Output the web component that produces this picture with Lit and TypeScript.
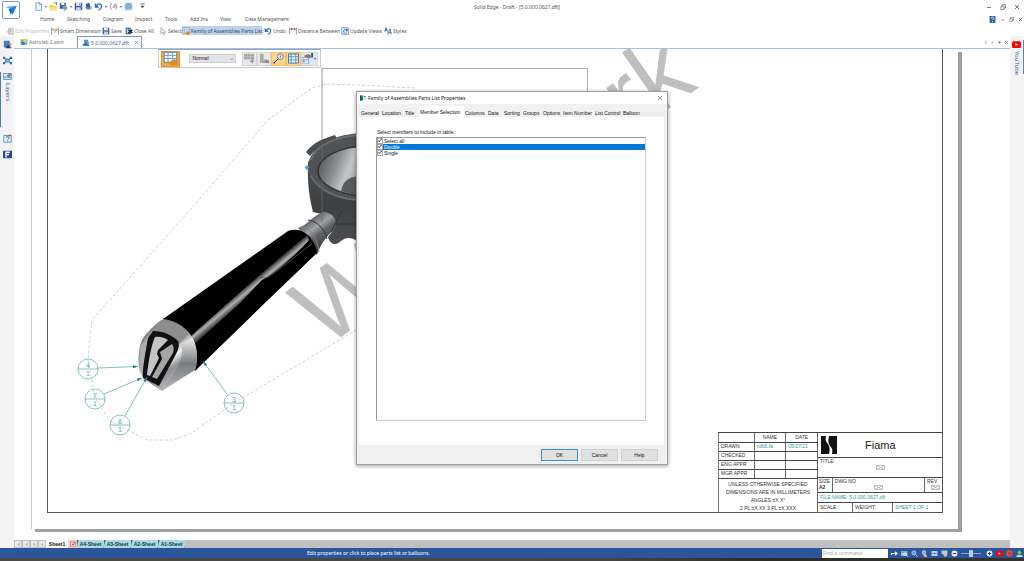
import { LitElement, html, svg, css, TemplateResult } from "lit";
import { customElement, property, state } from "lit/decorators.js";
import { classMap } from "lit/directives/class-map.js";

const icons: Record<string, TemplateResult> = {
  logo: svg`<path d="M1 3.400 11 2.200 6.600 5.400z" fill="#4fb7f0"/><path d="M4 5.200 11 2.400 7.400 10z" fill="#1f7fd0"/><path d="M4 5 6 10.400 6.600 6z" fill="#0f5fb0"/>`,
  page: svg`<path d="M2.500 1h5l2.500 2.500V11h-7.500z" fill="#eef5fc" stroke="#5f8dc0"/><path d="M7.500 1v2.500H10" fill="none" stroke="#5f8dc0"/>`,
  open: svg`<path d="M1 4h4l1 1h4v6H1z" fill="#e9c53c"/><path d="M3 6h9l-2 5H1z" fill="#f8e27a"/><path d="M6 1h4v3" fill="none" stroke="#5aa646" stroke-width="1.500"/>`,
  save: svg`<path d="M1 1h10v10H1z" fill="#3f5fa8"/><path d="M3 1h6v4H3z" fill="#fff"/><path d="M3 7h6v4H3z" fill="#c6d2ec"/><path d="M7 2h1v2H7z" fill="#3f5fa8"/>`,
  saveAll: svg`<path d="M1 1h8v8H1z" fill="#3f5fa8"/><path d="M3 1h4v3H3z" fill="#fff"/><path d="M5 5h5v5H5z" fill="#7d9fd4"/><path d="M7 11l4-4" stroke="#6db04c" stroke-width="2"/>`,
  print: svg`<path d="M2 3 7 1l2 6-5 3z" fill="#2f5f9f"/><path d="M1 7h8v3H4z" fill="#4d8cc8"/><path d="M8 6h3v4H8z" fill="#a8c6e6"/>`,
  undo: svg`<path d="M3 5.500C5 1 11 2 10 6.500 9.500 9 8 10 6 11" fill="none" stroke="#2b7ac4" stroke-width="1.800"/><path d="M1 1v6.500h6z" fill="#2b6fb8"/>`,
  link: svg`<path d="M4 2C1 3 1 9 4 10M8 2c3 1 3 7 0 8M5 8l3-5v5" fill="none" stroke="#8d939b" stroke-width="1.300"/>`,
  sheetSet: svg`<path d="M1 1h10v10H1z" fill="#a9cbea"/><path d="M3 3h6M1 5.500h10M2 8h8" stroke="#4a86bf"/>`,
  more: svg`<path d="M3 2.500h6" stroke="#444"/><path d="M3 5h6L6 8z" fill="#444"/>`,
  edit: svg`<path d="M4 2h7v9H4z" fill="#ddd" stroke="#b3b3b3"/><path d="M1 7l5-4 3 3-5 5z" fill="#c4c4c4"/>`,
  dimension: svg`<path d="M1 1v10M11 1v10M1 4h4M8 4h3" stroke="#3764b0"/><path d="M8 1 4 6h2L4 11l6-6H7l2-4z" fill="#f0b923"/>`,
  closeAll: svg`<path d="M1 1h8v10H1z" fill="#3973c0"/><path d="M3 3h5v6H3z" fill="#cfe0f5"/><path d="M5 4l6 5M11 4 5 9" stroke="#111" stroke-width="2"/>`,
  select: svg`<path d="M3 1v9l2-2 2 4 1-1-1-3h3z" fill="#fff" stroke="#888"/>`,
  family: svg`<path d="M1 1h10v8H1z" fill="#fff" stroke="#3f74b8" stroke-width=".7"/><path d="M1 3.500h10M1 6h10M4 1v8M7.500 1v8" stroke="#5f92cc" stroke-width=".7"/><path d="M5 9 6.500 7.500 8 8.200 8.500 6.500 10 6.500 10.500 8 12 8.500 11.500 11 9 11.500 5.500 11z" fill="#e08a17"/>`,
  distance: svg`<path d="M1 1v10M11 1v10" stroke="#3764b0"/><path d="M1 3h10" stroke="#d03030"/><path d="M4 1.500v3M8 1.500v3" stroke="#d03030" stroke-width="1.500"/>`,
  update: svg`<path d="M1 1h10v10H1z" fill="#eaf3fc" stroke="#3d7dcc"/><path d="M4 8C3 4 6 3 9 4.500" fill="none" stroke="#2470c8" stroke-width="1.500"/><path d="M7.500 2 11 5 7.500 7z" fill="#2470c8"/><path d="M4 9h5" stroke="#2470c8"/>`,
  styles: svg`<path d="M1 7 3 1l2 6M1.700 5h2.600M5 11 9 3l2 8M6.500 8.500h4" fill="none" stroke="#235a9c" stroke-width="1.300"/>`,
  asm: svg`<path d="M1 2h10v8H1z" fill="#5db0e0"/><path d="M5 1h5v6H5z" fill="#f3cf3c"/><path d="M2 6h5v4H2z" fill="#2878b8"/>`,
  dft: svg`<path d="M4 1h5l2 9H5z" fill="#4ba4dd"/><path d="M1 8l5-2 5 4H1z" fill="#2a6fb4"/><path d="M4 1v6" stroke="#12406f"/>`,
  cube: svg`<path d="M1 1h8v9H1z" fill="#4d7fc0"/><path d="M7 6l4 4v1H3z" fill="#1d4077"/><path d="M9 4h2v6H9z" fill="#c2a86a"/>`,
  network: svg`<path d="M3 3l6 6M9 3 3 9" stroke="#3c78b4"/><path d="M3.500 4h5v4h-5z" fill="#7cb0de" stroke="#2f6fa8"/><path d="M0 1h3v3H0zM9 1h3v3H9zM0 8h3v3H0zM9 8h3v3H9z" fill="#2f6fa8"/>`,
  layers: svg`<path d="M.5 2h11v8H.5z" fill="#d8e8f6" stroke="#4c84bf"/><path d="M2 5l3 3H2z" fill="#55a152"/><path d="M5 4h5v4H6z" fill="#4694d6"/><path d="M7 2h4v2H7z" fill="#d05b5b"/>`,
  help: svg`<path d="M1 2h10v9H1z" fill="#eaf3fc" stroke="#3d7dbd"/><path d="M7 1h4v2H7z" fill="#d8453c"/><path d="M4 5c0-2 4-2 4 0 0 1.500-2 1.500-2 2.500M6 9v1" fill="none" stroke="#1f66a8" stroke-width="1.300"/>`,
  fmark: svg`<path d="M0 1h12v10H0z" fill="#26479e"/><path d="M4 10V3h5M4 6h4" fill="none" stroke="#fff" stroke-width="1.800"/>`,
  helpSolid: svg`<path d="M1 0h10v12H1z" fill="#2f67ad"/><path d="M4 4c0-2.500 4-2.500 4 0 0 1.500-2 1.500-2 3M6 9v1.500" fill="none" stroke="#fff" stroke-width="1.400"/>`,
  minimize: svg`<path d="M2 7h8" stroke="#555" stroke-width="1.500"/>`,
  restore: svg`<path d="M2 4.500h6V11H2zM4 4V1.500h7V8H8" fill="none" stroke="#555" stroke-width="1.300"/>`,
  close: svg`<path d="M2 2l8 8M10 2l-8 8" stroke="currentColor" stroke-width="1.600"/>`,
  left: svg`<path d="M8 2v8L4 6z" fill="#aaa"/>`,
  right: svg`<path d="M4 2v8l4-4z" fill="#aaa"/>`,
  down: svg`<path d="M2 4h8L6 8.500z" fill="#555"/>`,
  chevron: svg`<path d="M1 4l5 5 5-5" fill="none" stroke="#777" stroke-width="1.800"/>`,
  youtube: svg`<rect y="1.500" width="12" height="9" rx="2" fill="#f00"/><path d="M4.500 4v4L8 6z" fill="#fff"/>`,
  tableGray: svg`<path d="M0 1h11v6H0z" fill="#a6a6a6"/><path d="M0 4h11M3.500 1v6M7.500 1v6" stroke="#c8c8c8" stroke-width=".7"/><path d="M6.500 9h5M9 6.500v5" stroke="#999" stroke-width="1.500"/>`,
  stepGray: svg`<path d="M1 1h4v6h4v4H1z" fill="#aaa"/><path d="M7 8h4v3H7z" fill="#8a8a8a"/>`,
  balloon: svg`<circle cx="8" cy="4" r="3.200" fill="#eef3fb" stroke="#5e6f96"/><path d="M8 2.500v3" stroke="#5e6f96"/><path d="M5.500 6.500 1 11" stroke="#222"/><circle cx="1.500" cy="10.500" r="1" fill="#222"/>`,
  grid: svg`<path d="M.5 1h11v10H.5z" fill="#dff0fa" stroke="#3c6ea0"/><path d="M.5 4h11M.5 7.500h11M3.500 1v10M8.500 1v10" stroke="#4c80ac" stroke-width=".8"/>`,
  props: svg`<path d="M0 5h7v7H0z" fill="#e4edf8" stroke="#6b90bd" stroke-width=".7"/><path d="M1 7.500h2M4 7.500h2M1 9.500h2" stroke="#3b68a0"/><path d="M2 3l5-2 3 2-1 3-5-1z" fill="#8b7c62"/><path d="M10 0h2v5h-2z" fill="#344f9c"/>`,
  go: svg`<path d="M0 5h7V2l5 4-5 4V7H3L0 9z" fill="#fff"/>`,
  fit: svg`<path d="M0 2h11v8H0z" fill="#9fc4ee"/><path d="M1 4h9" stroke="#2d5fa5"/><circle cx="7" cy="7" r="2.300" fill="none" stroke="#fff" stroke-width="1.300"/><path d="M9 9l3 3" stroke="#fff"/>`,
  zoom: svg`<circle cx="5" cy="5" r="3.500" fill="#5d8ecb" stroke="#d5e5f8" stroke-width="1.300"/><path d="M8 8l3 3" stroke="#d5e5f8" stroke-width="1.500"/>`,
  zoomArea: svg`<circle cx="5" cy="4" r="3" fill="#7ba6da" stroke="#fff"/><path d="M7 6v6M4 8l6 3" stroke="#f3d267" stroke-width="2"/>`,
  windowFit: svg`<path d="M1 2h10v8H1z" fill="#dce9f8"/><path d="M3 4v4M9 4v4M5 5h2v2H5z" stroke="#3467b0"/>`,
  pan: svg`<path d="M1 1h10v6H1z" fill="#b6d1f0"/><path d="M4 5l5-1 2 5-4 3-3-3z" fill="#d9c39c"/>`,
  minus: svg`<circle cx="6" cy="6" r="5" fill="#eaf0f8"/><path d="M3 6h6" stroke="#234b87" stroke-width="1.800"/>`,
  plus: svg`<circle cx="6" cy="6" r="5" fill="#eaf0f8"/><path d="M3 6h6M6 3v6" stroke="#234b87" stroke-width="1.800"/>`,
  record: svg`<circle cx="6" cy="6" r="5.500" fill="#e0523f"/><circle cx="6" cy="6" r="2.500" fill="#c63a2c"/>`,
  upload: svg`<path d="M6 0l4 5H8v3H4V5H2z" fill="#7cc84a"/><path d="M1 9h10v3H1z" fill="#d6e4f2"/>`,
  tabPic: svg`<path d="M1 2h10v8H1z" fill="#f6e5f0" stroke="#d0507c"/><path d="M3 8l3-4 3 4z" fill="#4a74c8"/><path d="M8 2h3v3H8z" fill="#e04040"/>`,
  window: svg`<path d="M0 1h12v10H0z" fill="#cfe3ea"/><path d="M0 1h6v10H0z" fill="#2d8573"/><path d="M0 1h3v10H0z" fill="#1c4b64"/><path d="M8 2h3v2H8z" fill="#2f61b5"/>`,
};

@customElement("ui-icon")
export class UiIcon extends LitElement {
  @property() name = "";
  static styles = css`
    :host { display: inline-flex; flex: none; width: 8px; height: 8px; }
    svg { width: 100%; height: 100%; display: block; }
  `;
  render() {
    return html`<svg viewBox="0 0 12 12" aria-hidden="true">${icons[this.name]}</svg>`;
  }
}

@customElement("part-drawing")
export class PartDrawing extends LitElement {
  static styles = css`
    :host { display: block; }
    svg { display: block; width: 996px; height: 491px; overflow: hidden; }
    .mark { font: 100px "Liberation Sans", sans-serif; fill: #bfbfbf; }
    .phantom { fill: none; stroke: #c4c4c4; stroke-dasharray: 3 2; stroke-width: 0.8; }
    .balloon { fill: none; stroke: #66b4b8; stroke-width: 0.8; }
    .leader { stroke: #5fb0b4; stroke-width: 0.8; }
    .arrow { fill: #0f8086; }
    .num { font: 7px "Liberation Sans", sans-serif; fill: #57aaae; text-anchor: middle; }
  `;
  private balloons = [
    { x: 88, y: 369, n: "4", x1: 98, y1: 368, x2: 138, y2: 366.5 },
    { x: 95, y: 399, n: "7", x1: 104, y1: 394, x2: 142, y2: 378 },
    { x: 120, y: 425, n: "8", x1: 125, y1: 416, x2: 147, y2: 377 },
    { x: 234, y: 403, n: "3", x1: 227, y1: 394, x2: 203, y2: 361 },
  ];
  private balloon(b: (typeof this.balloons)[number]) {
    const a = (Math.atan2(b.y2 - b.y1, b.x2 - b.x1) * 180) / Math.PI;
    return svg`
      <circle class="balloon" cx=${b.x} cy=${b.y} r="10"/>
      <path class="balloon" d=${`M${b.x - 10} ${b.y}h20`}/>
      <text class="num" x=${b.x} y=${b.y - 1}>${b.n}</text>
      <text class="num" x=${b.x} y=${b.y + 7}>1</text>
      <line class="leader" x1=${b.x1} y1=${b.y1} x2=${b.x2} y2=${b.y2}/>
      <path class="arrow" d="M0 0-5-1.500-5 1.500z" transform=${`translate(${b.x2} ${b.y2}) rotate(${a})`}/>`;
  }
  render() {
    return html`<svg viewBox="14 49 996 491" role="img" aria-label="Portafilter drawing">
      <defs>
        <linearGradient id="stripe" gradientUnits="userSpaceOnUse" x1="236" y1="292" x2="246" y2="304">
          <stop offset="0" stop-color="#000"/><stop offset=".45" stop-color="#b0b0b0"/><stop offset=".6" stop-color="#777"/><stop offset="1" stop-color="#000"/>
        </linearGradient>
        <linearGradient id="cap" gradientUnits="userSpaceOnUse" x1="150" y1="325" x2="186" y2="378">
          <stop offset="0" stop-color="#8d8d8d"/><stop offset=".35" stop-color="#6e6e6e"/><stop offset=".6" stop-color="#f2f2f2"/><stop offset=".75" stop-color="#8c9296"/><stop offset="1" stop-color="#b9bec1"/>
        </linearGradient>
        <linearGradient id="side" x1="0" y1="0" x2="0" y2="1">
          <stop offset="0" stop-color="#eee"/><stop offset=".5" stop-color="#777c80"/><stop offset="1" stop-color="#aeb3b6"/>
        </linearGradient>
        <linearGradient id="neck" gradientUnits="userSpaceOnUse" x1="306" y1="216" x2="328" y2="246">
          <stop offset="0" stop-color="#3d3f43"/><stop offset=".4" stop-color="#a0a2a7"/><stop offset=".6" stop-color="#606266"/><stop offset="1" stop-color="#3a3b3e"/>
        </linearGradient>
        <linearGradient id="cup" gradientUnits="userSpaceOnUse" x1="317" y1="160" x2="368" y2="180">
          <stop offset="0" stop-color="#505355"/><stop offset=".35" stop-color="#8b8e90"/><stop offset=".6" stop-color="#c4c7c9"/><stop offset="1" stop-color="#85888a"/>
        </linearGradient>
        <linearGradient id="body" x1="0" y1="0" x2="0" y2="1">
          <stop offset="0" stop-color="#55585a"/><stop offset=".6" stop-color="#3e4042"/><stop offset="1" stop-color="#4a4c4e"/>
        </linearGradient>
      </defs>

      <path d="M322 68.500h265.500V200" fill="none" stroke="#b0b0b0"/>
      <path class="phantom" d="M415 88 360 85 325 84 312 88 268 120 190 210 92 320 88 360 95 398 110 421 147 440H172L190 434 234 403 356 330"/>
      <text class="mark" transform="translate(324 349) rotate(-35)">W</text>
      <text class="mark" transform="translate(631 135) rotate(-35)">rk</text>

      <path d="M308 162 C307 185 310 200 313 212 L330 216 335 228 328 237 C330 245 336 246 341 241 348 235 355 239 362 244 H400V140H330z" fill="url(#body)"/>
      <path d="M306 152 C314 142 322 139 335 135 L337 139 C325 142 317 148 310 156z" fill="#4b4e50"/>
      <ellipse cx="364" cy="167" rx="56" ry="34" fill="#505355"/>
      <path d="M311 160C317 144 335 137 360 135" fill="none" stroke="#6f7274" stroke-width="1.500"/>
      <ellipse cx="368" cy="171" rx="50" ry="25" fill="url(#cup)" stroke="#303234" stroke-width="1.500"/>
      <path d="M341 191C343 179 352 176 362 176V197z" fill="#595c5e"/>
      <path d="M311 176C320 191 336 199 360 200" fill="none" stroke="#6a6d6f" stroke-width="1.500"/>
      <path d="M298 228C306 226 310 218 323 212 332 212 339 220 335 229 329 234 321 242 317 255z" fill="url(#neck)"/>
      <path d="M300 227C309 226 317 236 319 252" fill="none" stroke="#7e8084"/>
      <path d="M308 220C317 221 325 229 327 239" fill="none" stroke="#37393c"/>
      <path d="M342 210 331 232M335 224h22" fill="none" stroke="#303234"/>
      <path d="M322 68V222" stroke="#666" stroke-opacity=".7"/>
      <path d="M307 165l2.500 2.500-2.500 2.500-2.500-2.500z" fill="#48a8dc"/>

      <path d="M163 319 190 300 288 231C302 226 315 238 317 253L268 300 195 371 178 340z" fill="#000"/>
      <path d="M182 344 237 295 C262 273 285 253 307 235 L309 240 C292 259 270 277 262 280 L240 303 188 350z" fill="url(#stripe)"/>
      <path d="M312 244C294 257 277 272 270 276 265 279 262 277 258 278" fill="none" stroke="#555" stroke-width=".8"/>

      <path d="M142 340C148 330 158 322 163 319 176 320 187 328 192 337 197 345 199 358 195 370L162 391 142 378C138 371 137 352 142 340z" fill="url(#cap)"/>
      <path d="M142 342C148 332 158 323 165 321 175 322 184 327 189 334L179 344 152 331z" fill="#8d8d8d"/>
      <path d="M180 344C184 350 182 360 176 370L163 389 195 370C199 358 197 348 192 338z" fill="url(#side)"/>
      <path d="M141 345C138 355 139 370 143 377L149 340 153 330z" fill="#a8b0b5"/>
      <path d="M153 331C163 331 172 335 178 341 180 346 178 350 176 354L159 386 143 378C142 370 146 350 148 338z" fill="#111"/>
      <path d="M155 337C160 336 165 338 168 340L158 350 157 354 159 358 150 376 147 375C148 365 151 345 155 337z" fill="#c4c4c4"/>
      <path d="M172 344C174 346 174 350 173 353L157 379 152 377 162 359 160 352z" fill="#a5a5a5"/>
      ${this.balloons.map((b) => this.balloon(b))}
    </svg>`;
  }
}

@customElement("title-block")
export class TitleBlock extends LitElement {
  static styles = css`
    :host { display: grid; grid-template-columns: 99px 124px; height: 80px; background: #fff;
      font: 5px/8px "Liberation Sans", sans-serif; color: #333;
      border-top: 1px solid #444; border-left: 1px solid #777; }
    table { border-collapse: collapse; width: 100%; table-layout: fixed; }
    th, td { height: 9px; padding: 0 2px; box-sizing: border-box; font-weight: 400; text-align: left; border-bottom: 1px solid #444; border-right: 1px solid #666; line-height: 7px; }
    thead th { text-align: center; }
    .wide { width: 35px; }
    .notes { text-align: center; padding-top: 1px; border-right: 1px solid #666; flex: 1; }
    .left, .right { display: flex; flex-direction: column; }
    .brand { display: flex; align-items: center; gap: 27px; height: 25px; padding-left: 2px; font-size: 11px; box-sizing: border-box; border-bottom: 1px solid #444; color: #222; }
    .brand svg { width: 18px; height: 18px; }
    .row { display: flex; height: 10px; border-bottom: 1px solid #444; box-sizing: border-box; }
    .row > div { padding: 0 2px; border-right: 1px solid #666; box-sizing: border-box; }
    .row > div:last-child { border-right: 0; flex: 1; }
    .title { height: 20px; line-height: 6px; }
    .size { height: 15px; line-height: 6px; }
    .last { border-bottom: 0; }
    .teal { color: #2e9ca0; }
    .row > .c1 { width: 15px; padding: 0 1px; } .c2 { width: 94px; } .c3 { width: 35px; } .c4 { width: 40px; }
    .tag { display: block; width: 9px; height: 5px; margin: 1px auto; }
    .over { margin-left: 4px; }
  `;
  private tag(cls: string) {
    return html`<svg class="tag ${cls}" viewBox="0 0 9 5"><path d="M.5.5h8v4h-8zM.5.5l8 4M8.500.5l-8 4" fill="none" stroke="#aaa" stroke-width=".7"/></svg>`;
  }
  render() {
    return html`
      <div class="left">
        <table>
          <thead><tr><th class="wide"></th><th>NAME</th><th>DATE</th></tr></thead>
          <tbody>
            <tr><th>DRAWN</th><td class="teal">vdb6.fa</td><td class="teal">05/27/21</td></tr>
            ${["CHECKED", "ENG APPR", "MGR APPR"].map((r) => html`<tr><th>${r}</th><td></td><td></td></tr>`)}
          </tbody>
        </table>
        <div class="notes">UNLESS OTHERWISE SPECIFIED<br />DIMENSIONS ARE IN MILLIMETERS<br />ANGLES ±X.X°<br />2 PL ±X.XX 3 PL ±X.XXX</div>
      </div>
      <div class="right">
        <div class="brand">
          <svg viewBox="0 0 18 18" aria-hidden="true"><path d="M1 0h5C5 4 6 6 8 8c2 3 2 6 1 10H1zM9 0h8v18h-5c1-4 0-6-2-8C8 7 8 4 9 0z" fill="#111"/></svg>
          <span>Fiama</span>
        </div>
        <div class="row title"><div>TITLE${this.tag("")}</div></div>
        <div class="row size">
          <div class="c1">SIZE<br /><b>A2</b></div><div class="c2">DWG NO${this.tag("")}</div><div>REV${this.tag("over")}</div>
        </div>
        <div class="row"><div class="teal">FILE NAME: 5.0.000.0627.dft</div></div>
        <div class="row last"><div class="c3">SCALE:</div><div class="c4">WEIGHT:</div><div class="teal">SHEET 1 OF 1</div></div>
      </div>`;
  }
}

@customElement("parts-dialog")
export class PartsDialog extends LitElement {
  @state() private active = "Member Selection";
  @state() private members = ["Select all", "Double", "Single"];
  private tabs = ["General", "Location", "Title", "Member Selection", "Columns", "Data", "Sorting", "Groups", "Options", "Item Number", "List Control", "Balloon"];
  static styles = css`
    :host { display: flex; flex-direction: column; box-sizing: border-box; width: 312px; height: 374px; background: #f0f0f0;
      border: 1px solid #a2a2a2; box-shadow: 0 1px 4px rgba(0,0,0,.4); font: 5px/6px "Liberation Sans", sans-serif; color: #111; }
    button { font: inherit; color: inherit; border: 0; padding: 0; background: none; }
    header { display: flex; align-items: center; gap: 2px; height: 12px; padding: 0 4px 0 3px; background: #fff; font: 5px/6px "Noto Sans", sans-serif; }
    header ui-icon { width: 6px; height: 6px; }
    header h1 { flex: 1; margin: 0; font: inherit; }
    header button { display: flex; color: #777; }
    nav { display: grid; grid-template-columns: 21px 23px 15px 45px 23px 16px 19px 20px 20px 32px 28px 20px; height: 13px; padding: 2px 0 0 3px; box-sizing: border-box; }
    nav button { text-align: left; white-space: nowrap; padding: 0 1px; margin-top: 2px; }
    nav button.on { background: #fff; margin-top: 0; }
    main { flex: 1; display: flex; flex-direction: column; margin: 0 3px 0 2px; padding: 12px 18px 24px 17px; background: #fff; }
    p { margin: 0 0 2px; padding-left: 1px; }
    ul { flex: 1; list-style: none; margin: 0; padding: 0; border: 1px solid #999; border-right-color: #ccc; border-bottom-color: #ccc; }
    li, label { display: flex; align-items: center; height: 6px; }
    label { gap: 1px; line-height: 6px; }
    li.on { background: #0078d7; color: #fff; }
    input { appearance: none; width: 6px; height: 6px; margin: 0; border: 1px solid #aaa; background: #fff; position: relative; box-sizing: border-box; }
    input:checked::after { content: ""; position: absolute; left: 0; top: 0; width: 3px; height: 1px; border: solid #666; border-width: 0 0 1px 1px; transform: rotate(-45deg); }
    footer { display: flex; justify-content: flex-end; align-items: center; gap: 3px; height: 19px; padding: 0 9px; }
    footer button { width: 37px; height: 12px; background: #e1e1e1; border: 1px solid #d0d0d0; }
    footer button.primary { border-color: #3c8fdb; }
  `;
  render() {
    return html`
      <header><ui-icon name="window"></ui-icon><h1>Family of Assemblies Parts List Properties</h1>
        <button aria-label="Close"><ui-icon name="close"></ui-icon></button></header>
      <nav>${this.tabs.map((t) => html`<button class=${classMap({ on: t === this.active })} @click=${() => (this.active = t)}>${t}</button>`)}</nav>
      <main>
        <p>Select members to include in table:</p>
        <ul>${this.members.map((m, i) => html`<li class=${classMap({ on: i === 1 })}><label><input type="checkbox" checked />${m}</label></li>`)}</ul>
      </main>
      <footer><button class="primary">OK</button><button>Cancel</button><button>Help</button></footer>`;
  }
}

@customElement("app-root")
export class AppRoot extends LitElement {
  private quick = ["page", "caret", "open", "saveAll", "caret", "save", "print", "undo", "caret", "link", "caret", "sheetSet", "more"];
  private menus = ["Home", "Sketching", "Diagram", "Inspect", "Tools", "Add Ins", "View", "Data Management"];
  private tools: [string, string][] = [
    ["edit", "Edit Properties"], ["dimension", "Smart Dimension"], ["save", "Save"], ["closeAll", "Close All"], ["select", "Select"],
    ["family", "Family of Assemblies Parts List"], ["undo", "Undo"], ["distance", "Distance Between"], ["update", "Update Views"], ["styles", "Styles"],
  ];
  static styles = css`
    :host { display: flex; flex-direction: column; min-height: 100vh; background: #fff; position: relative; overflow: hidden;
      font: 5px/8px "Noto Sans", sans-serif; color: #555; }
    * { box-sizing: border-box; }
    button { font: inherit; color: inherit; border: 0; padding: 0; background: none; text-align: left; white-space: nowrap; }
    .top { display: flex; height: 25px; }
    .logo { width: 18px; height: 18px; margin: 1px 0 0 2px; border: 1px solid #7f9cc8; border-radius: 2px; display: flex; align-items: center; justify-content: center; }
    .logo ui-icon { width: 14px; height: 14px; }
    .head { flex: 1; display: flex; flex-direction: column; }
    .titlebar { display: flex; align-items: center; height: 13px; }
    .titlebar > * { flex: 1; }
    .titlebar .name { flex: none; margin-right: 20px; }
    .quick { display: flex; gap: 1px; padding-left: 14px; align-items: center; }
    .quick ui-icon { width: 9px; height: 9px; }
    .quick .caret { width: 4px; height: 4px; }
    .quick .more { margin-left: 4px; }
    .win { display: flex; justify-content: flex-end; gap: 8px; padding-right: 4px; }
    .win ui-icon { width: 6px; height: 6px; display: block; }
    .menurow { display: flex; justify-content: space-between; align-items: center; height: 12px; }
    .menus { display: grid; grid-template-columns: 27px 36px 32px 30px 25px 30px 25px 48px; padding-left: 20px; }
    .small { gap: 4px; padding-right: 1px; align-items: center; }
    .small ui-icon { width: 5px; height: 5px; }
    .small ui-icon.q { width: 7px; height: 7px; }
    .toolbar { display: grid; grid-template-columns: 45px 51px 23px 34px 23px 82px 25px 52px 43px 27px; align-items: center; height: 11px; padding-left: 6px; }
    .toolbar button { display: flex; align-items: center; gap: 1px; height: 9px; }
    .toolbar button:disabled { color: #c4c4c4; }
    .toolbar .on { background: #bdd1f0; width: 80px; color: #444; }
    .body { flex: 1; display: flex; }
    .rail { width: 14px; background: #f3f3f3; display: flex; flex-direction: column; align-items: center; gap: 7px; padding-top: 4px; }
    .rail button { display: flex; flex-direction: column; align-items: center; gap: 2px; color: #3b66a8; }
    .rail ui-icon { width: 9px; height: 9px; }
    .rail .label { writing-mode: vertical-rl; font-size: 6px; line-height: 8px; }
    .rail .layers { width: 14px; height: 55px; border-left: 1px solid #4f7ac0; }
    .rail.end { padding-top: 4px; }
    .rail.end button { width: 14px; height: 34px; border-right: 1px solid #5f83bb; }
    .work { flex: 1; display: flex; flex-direction: column; min-width: 0; }
    .docs { display: flex; align-items: center; height: 13px; padding-left: 6px; border-bottom: 1px solid #a9bfe0; color: #777; }
    .docs button { display: flex; align-items: center; gap: 1px; width: 57px; height: 12px; }
    .docs button.on { width: 65px; padding: 0 2px 0 4px; border: 1px solid #7b9bd0; border-bottom: 0; color: #3f66ad; }
    .docs button.on span { flex: 1; }
    .docs .x { width: 5px; height: 5px; }
    .docs .ctl { margin-left: auto; display: flex; gap: 2px; padding-right: 1px; }
    .docs .ctl ui-icon { width: 5px; height: 5px; }
    .canvas { flex: 1; position: relative; display: flex; padding: 0 52px 11px 17px; background: #fff; min-height: 300px; }
    .sheet { flex: 1; display: flex; padding: 0 15px 16px; border-left: 1px solid #ccc; background: #fff; box-shadow: 4px 3px 0 #a0a0a0; clip-path: inset(0 -4px -3px 0); }
    .frame { flex: 1; display: flex; justify-content: flex-end; align-items: flex-end; border: 1px solid #555; border-top: 0; }
    .art { position: absolute; inset: 0; overflow: hidden; pointer-events: none; }
    .float { position: absolute; left: 144px; top: 0; height: 19px; width: 163px; display: flex; align-items: center; padding: 1px 2px; background: #fff; border: 1px solid #ccc; border-top-color: #8ba5cc; }
    .float button { width: 15px; height: 14px; display: flex; align-items: center; justify-content: center; background: #e9e9e9; border: 1px solid #d6d6d6; }
    .float button ui-icon { width: 11px; height: 11px; }
    .float .big { width: 20px; height: 16px; background: #f5a742; border-color: #e8922a; }
    .float .big ui-icon { width: 15px; height: 15px; }
    .float .on { background: #ffd58a; border-color: #f3c06b; }
    .float .blue { background: #dbe7f6; width: 18px; }
    .float .blue .caret { width: 4px; height: 4px; }
    .float select { appearance: none; width: 47px; height: 9px; margin: 0 6px 0 9px; padding: 0 2px; border: 1px solid #ccc; background: #e3e3e3; border-radius: 0; font: 5px/7px "Liberation Sans", sans-serif; color: #222; }
    .pick { position: relative; display: flex; }
    .pick ui-icon { position: absolute; right: 8px; top: 3px; width: 4px; height: 4px; }
    .sheets { display: flex; height: 8px; background: #c0c0c0; font: bold 5px/8px "Liberation Sans", sans-serif; color: #234; }
    .sheets .nav { width: 8px; background: #e8e8e8; border: 1px solid #c4c4c4; display: flex; align-items: center; justify-content: center; }
    .sheets .nav ui-icon { width: 5px; height: 5px; }
    .sheets .tab { width: 27px; text-align: center; background: linear-gradient(105deg, #557 1px, #a6dbe4 2px, #a6dbe4 calc(100% - 1px), #557 100%); }
    .sheets .tab.on { width: 22px; background: #fff; color: #111; }
    .sheets .tab.pic { width: 9px; background: #f8c8a8; display: flex; align-items: center; justify-content: center; }
    .sheets .tab.pic ui-icon { width: 6px; height: 6px; }
    .status { display: flex; align-items: center; justify-content: flex-end; gap: 3px; height: 10px; padding: 0 1px 0 0; background: #2b579a; color: #fff; }
    .status .msg { flex: 1; padding-left: 307px; white-space: nowrap; }
    .status input[type="text"] { width: 66px; height: 9px; padding: 0 1px; border: 0; font: inherit; }
    .status input::placeholder { color: #aaa; opacity: 1; }
    .status button { display: flex; }
    .status button ui-icon { width: 7px; height: 7px; }
    .status input[type="range"] { appearance: none; width: 20px; height: 8px; margin: 0 2px 0 0; background: linear-gradient(#8aa5cf, #8aa5cf) center / 100% 1px no-repeat; }
    .status input[type="range"]::-webkit-slider-thumb { appearance: none; width: 4px; height: 7px; background: #b9cfee; border-radius: 1px; }
    .task { height: 3px; background: linear-gradient(90deg, #4a4a4a, #444 60%, #2b2b26 75%, #333); }
    .overlay { position: absolute; inset: 0; display: flex; align-items: center; justify-content: center; padding-bottom: 5px; pointer-events: none; }
    .overlay parts-dialog { pointer-events: auto; }
  `;
  render() {
    const ic = (n: string, c = "") => html`<ui-icon class=${c} name=${n}></ui-icon>`;
    return html`
      <div class="top">
        <button class="logo" aria-label="Application menu">${ic("logo")}</button>
        <div class="head">
          <div class="titlebar">
            <div class="quick">${this.quick.map((q) => (q === "caret" ? ic("down", "caret") : ic(q, q)))}</div>
            <div class="name">Solid Edge - Draft - [5.0.000.0627.dft]</div>
            <div class="win">
              <button aria-label="Minimize">${ic("minimize")}</button><button aria-label="Restore">${ic("restore")}</button><button aria-label="Close">${ic("close")}</button>
            </div>
          </div>
          <div class="menurow">
            <nav class="menus">${this.menus.map((m) => html`<button>${m}</button>`)}</nav>
            <div class="win small">${ic("helpSolid", "q")}${ic("minimize")}${ic("restore")}${ic("close")}</div>
          </div>
        </div>
      </div>
      <div class="toolbar">
        ${this.tools.map(([i, t]) => html`<button ?disabled=${i === "edit"} class=${classMap({ on: i === "family" })}>${ic(i)}${t}</button>`)}
      </div>
      <div class="body">
        <aside class="rail">
          <button aria-label="Parts">${ic("cube")}</button>
          <button aria-label="Blocks">${ic("network")}</button>
          <button class="layers">${ic("layers")}<span class="label">Layers</span></button>
          <button aria-label="Help">${ic("help")}</button>
          <button aria-label="Feature">${ic("fmark")}</button>
        </aside>
        <div class="work">
          <div class="docs">
            <button>${ic("asm")}<span>Astrolab 2.asm</span></button>
            <button class="on">${ic("dft")}<span>5.0.000.0627.dft</span>${ic("close", "x")}</button>
            <div class="ctl">${ic("left")}${ic("right")}${ic("down")}${ic("close")}</div>
          </div>
          <div class="canvas">
            <div class="sheet"><div class="frame"><title-block></title-block></div></div>
            <part-drawing class="art"></part-drawing>
            <div class="float">
              <button class="big" aria-label="Family of assemblies">${ic("family")}</button>
              <div class="pick"><select aria-label="Style"><option>Normal</option></select>${ic("chevron")}</div>
              <button aria-label="Table">${ic("tableGray")}</button>
              <button aria-label="Step">${ic("stepGray")}</button>
              <button class="on" aria-label="Auto-balloon">${ic("balloon")}</button>
              <button class="on" aria-label="Grid">${ic("grid")}</button>
              <button class="blue" aria-label="Properties">${ic("props")}${ic("down", "caret")}</button>
            </div>
          </div>
          <div class="sheets">
            ${["left", "left", "right", "right"].map((n) => html`<button class="nav" aria-label="Scroll sheets">${ic(n)}</button>`)}
            <button class="tab on">Sheet1</button>
            <button class="tab pic" aria-label="Background">${ic("tabPic")}</button>
            ${["A4-Sheet", "A3-Sheet", "A2-Sheet", "A1-Sheet"].map((s) => html`<button class="tab">${s}</button>`)}
          </div>
        </div>
        <aside class="rail end"><button>${ic("youtube")}<span class="label">YouTube</span></button></aside>
      </div>
      <footer class="status">
        <span class="msg">Edit properties or click to place parts list or balloons.</span>
        <input type="text" placeholder="Find a command" aria-label="Find a command" />
        ${["go", "fit", "zoom", "zoomArea", "windowFit", "pan", "minus"].map((n) => html`<button aria-label=${n}>${ic(n)}</button>`)}
        <input type="range" aria-label="Zoom" />
        ${["plus", "youtube", "record", "upload"].map((n) => html`<button aria-label=${n}>${ic(n)}</button>`)}
      </footer>
      <div class="task"></div>
      <div class="overlay"><parts-dialog></parts-dialog></div>`;
  }
}
